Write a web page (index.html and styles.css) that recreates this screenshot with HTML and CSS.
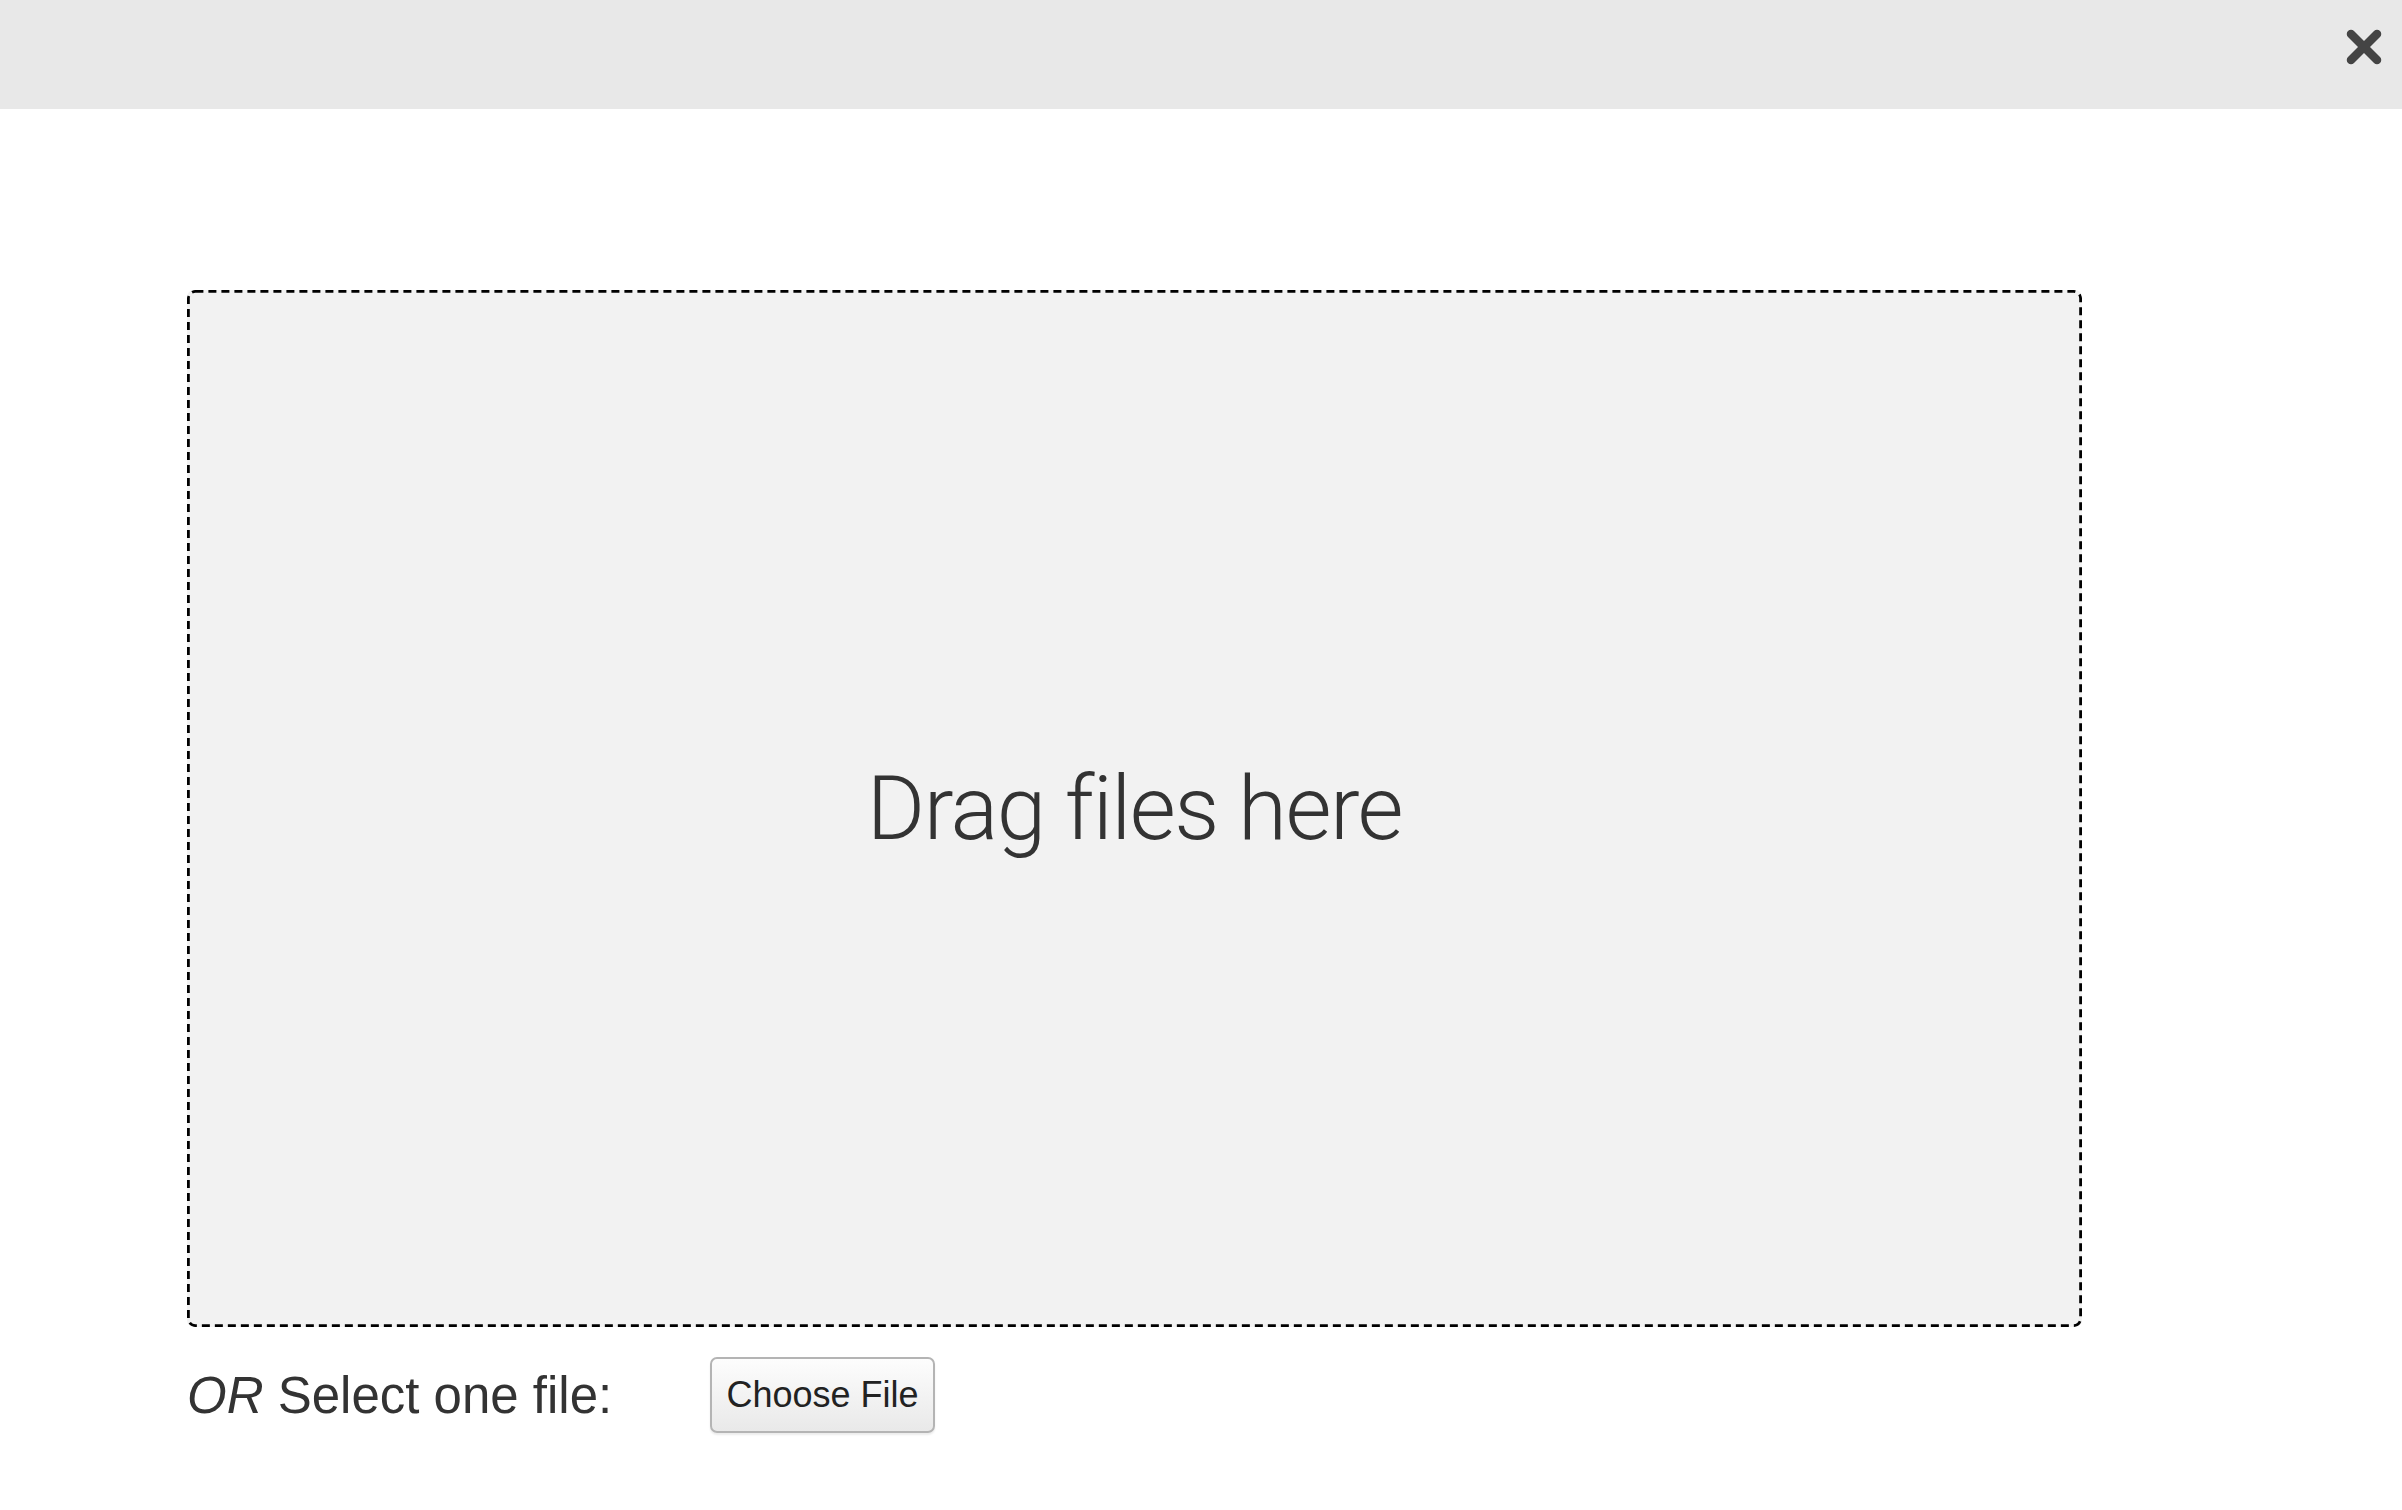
FILE: index.html
```html
<html>
<head>
  <meta charset="utf-8" />
  <title>Upload</title>
  <link rel="stylesheet" href="styles.css">
</head>
<body>

<div class="topbar">
  <button class="close" title="Close">
    <svg width="36" height="36" viewBox="0 0 36 36">
      <line x1="5" y1="5" x2="31" y2="31" />
      <line x1="31" y1="5" x2="5" y2="31" />
    </svg>
  </button>
</div>

<div class="content">
  <div class="dropzone">
    <span class="droptext">Drag files here</span>
  </div>

  <div class="selectrow">
    <label class="selectlabel"><em>OR</em> Select one file:</label>
    <button class="choose">Choose File</button>
  </div>
</div>

</body>
</html>
```

FILE: styles.css
```css
body {
  margin: 0;
  font-family: "Liberation Sans", Arial, sans-serif;
  color: #333;
  background: #fff;
}

.topbar {
  height: 109px;
  background: #e8e8e8;
  display: flex;
  justify-content: flex-end;
  align-items: flex-start;
}

.close {
  border: none;
  background: none;
  padding: 0;
  margin: 29px 20px 0 0;
  width: 36px;
  height: 36px;
}

.close line {
  stroke: #444;
  stroke-width: 8.5;
  stroke-linecap: round;
}

.content {
  padding: 181px 0 0 187px;
}

/* dashed outline drawn with an svg so the dash length matches */
.dropzone {
  width: 1895px;
  height: 1037px;
  box-sizing: border-box;
  border-radius: 7px;
  background-color: #f2f2f2;
  background-image: url("data:image/svg+xml,%3csvg xmlns='http://www.w3.org/2000/svg' width='100%25' height='100%25'%3e%3crect x='1.4' y='1.4' width='1892.2' height='1034.2' rx='7' ry='7' fill='none' stroke='%23000' stroke-width='2.8' stroke-dasharray='8%2c 5'/%3e%3c/svg%3e");
  display: flex;
  justify-content: center;
  align-items: center;
}

.droptext {
  font-family: Roboto, "Liberation Sans", sans-serif;
  font-weight: 300;
  font-size: 89px;
  letter-spacing: -1.5px;
  color: #333;
}

.selectrow {
  display: flex;
  align-items: center;
  margin-top: 30px;
}

.selectlabel {
  font-size: 51px;
  width: 523px;
}

.choose {
  font-family: "Liberation Sans", Arial, sans-serif;
  font-size: 36px;
  color: #222;
  width: 225px;
  height: 76px;
  padding: 0;
  border: 2px solid #b4b4b4;
  border-radius: 7px;
  background: linear-gradient(#fdfdfd, #e9e9e9);
  box-shadow: 0 2px 2px rgba(0, 0, 0, 0.08);
}
```
